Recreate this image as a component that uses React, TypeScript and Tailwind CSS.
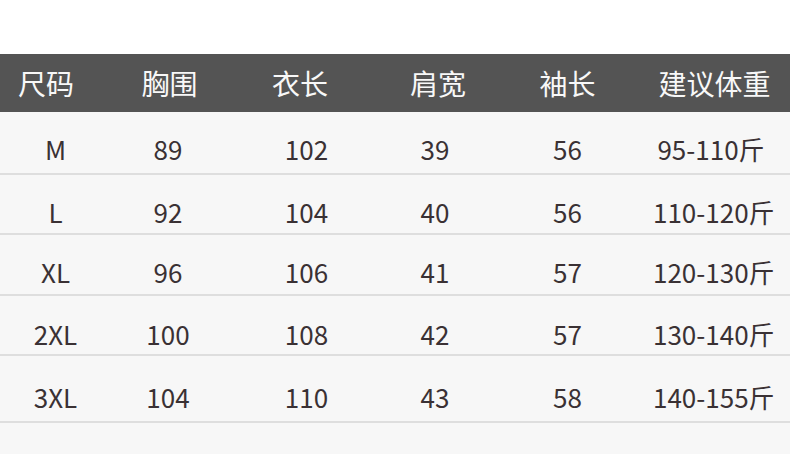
const rows = [
  { size: "M", chest: "89", length: "102", shoulder: "39", sleeve: "56", weight: "95-110斤", h: "h-[63px]", pt: "pt-[22px]" },
  { size: "L", chest: "92", length: "104", shoulder: "40", sleeve: "56", weight: "110-120斤", h: "h-[60px]", pt: "pt-[22px]" },
  { size: "XL", chest: "96", length: "106", shoulder: "41", sleeve: "57", weight: "120-130斤", h: "h-[61px]", pt: "pt-[22px]" },
  { size: "2XL", chest: "100", length: "108", shoulder: "42", sleeve: "57", weight: "130-140斤", h: "h-[60px]", pt: "pt-[23px]" },
  { size: "3XL", chest: "104", length: "110", shoulder: "43", sleeve: "58", weight: "140-155斤", h: "h-[67px]", pt: "pt-[26px]" },
];

const headers = ["尺码", "胸围", "衣长", "肩宽", "袖长", "建议体重"];

export default function App() {
  return (
    <div
      className="w-[790px] h-[466px] bg-white overflow-hidden"
      style={{ fontFamily: '"Noto Sans CJK SC", "Noto Sans", sans-serif' }}
    >
      <div className="h-[54px]" />

      {/* Header */}
      <div className="h-[58px] bg-[#545454] grid grid-cols-[92px_155px_106px_170px_89px_1fr] items-center text-[28px] leading-[30px] text-[#f8f8f8]">
        {headers.map((t, i) => (
          <div key={t} className={`text-center whitespace-nowrap ${i === 5 ? "pl-[27px]" : ""}`}>
            {t}
          </div>
        ))}
      </div>

      {/* Rows */}
      <div className="bg-[#f7f7f7]">
        {rows.map((r) => (
          <div
            key={r.size}
            className={`${r.h} ${r.pt} border-b-2 border-[#dedede] grid grid-cols-[111px_114px_163px_94px_171px_1fr] items-start text-[26px] leading-[30px] text-[#3a3134] whitespace-nowrap`}
          >
            <div className="text-center">{r.size}</div>
            <div className="text-center">{r.chest}</div>
            <div className="text-center">{r.length}</div>
            <div className="text-center">{r.shoulder}</div>
            <div className="text-center">{r.sleeve}</div>
            <div className="flex justify-center pr-[21px]">{r.weight}</div>
          </div>
        ))}
        <div className="h-[31px]" />
      </div>
    </div>
  );
}
